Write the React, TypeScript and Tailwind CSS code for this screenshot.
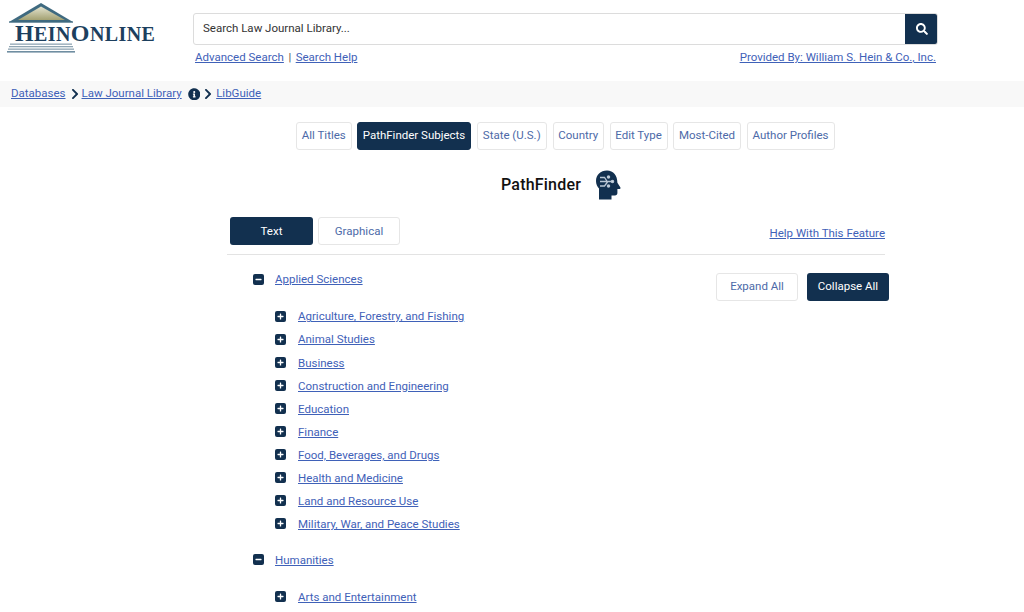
import { FaChevronRight, FaSearch, FaInfoCircle, FaPlus, FaMinus } from "react-icons/fa";

const F = "[font-family:Roboto,sans-serif]";

function Logo() {
  return (
    <div className="relative w-[160px] h-[54px] shrink-0">
      <svg width="160" height="54" viewBox="0 0 160 54" className="absolute left-0 top-[-1px]">
        <defs>
          <linearGradient id="ped" x1="0" y1="0" x2="0" y2="1">
            <stop offset="0" stopColor="#e4e4d0" />
            <stop offset="1" stopColor="#a3a172" />
          </linearGradient>
        </defs>
        <path d="M41 3 L9 22 H73 Z" fill="#3f6a80" />
        <path d="M41 6.5 L18 20 H65 Z" fill="url(#ped)" />
        <rect x="9" y="21.5" width="64" height="1.2" fill="#3f6a80" />
        <rect x="10" y="43.5" width="62" height="1.3" fill="#8fa5b3" />
        <rect x="9" y="46" width="64" height="1.3" fill="#8fa5b3" />
        <rect x="8" y="48.5" width="66" height="1.3" fill="#8fa5b3" />
        <rect x="7" y="51" width="68" height="1.6" fill="#6f8ea1" />
      </svg>
      <div className="absolute left-[15px] top-[20px] whitespace-nowrap text-[#1c3f5e] font-bold leading-[24px] [font-family:'Liberation_Serif',serif] tracking-[0.4px]">
        <span className="text-[24px]">H</span>
        <span className="text-[20px]">EIN</span>
        <span className="text-[24px]">O</span>
        <span className="text-[20px]">NLINE</span>
      </div>
    </div>
  );
}

function HeadIcon() {
  return (
    <svg width="26" height="30" viewBox="0 0 26 30">
      <path
        d="M12 0.5C5.5 0.5 1 5 1 11c0 3.4 1.3 5.6 3 7.5V29.5h12.5v-4h3.5c1.4 0 2.4-1 2.4-2.4V19h2.2c.8 0 1.2-.9.8-1.5l-3-4.7C22.4 5.5 18.5.5 12 .5Z"
        fill="#12304f"
      />
      <g stroke="#b9c6d4" strokeWidth="1.3" fill="#dfe6ee">
        <path d="M5 7.5h4.5l3 4.5M5 11.5h12M5 16h4.5l3-4" fill="none" />
        <circle cx="13.5" cy="7" r="1.1" />
        <circle cx="17.5" cy="11.5" r="1.1" />
        <circle cx="13.5" cy="16" r="1.1" />
      </g>
    </svg>
  );
}

function Tab({ label, active, w }: { label: string; active?: boolean; w: string }) {
  return (
    <div
      className={
        "h-[28px] flex items-center justify-center rounded-[3px] border text-[11.5px] " +
        w +
        (active ? " bg-[#12304f] border-[#12304f] text-white" : " bg-white border-[#e6e6e6] text-[#4d6aa8]")
      }
    >
      {label}
    </div>
  );
}

function Toggle({ open }: { open?: boolean }) {
  const Icon = open ? FaMinus : FaPlus;
  return (
    <span className="w-[11px] h-[11px] rounded-[2px] bg-[#12304f] flex items-center justify-center shrink-0">
      <Icon size={7} color="#fff" />
    </span>
  );
}

function Parent({ label }: { label: string }) {
  return (
    <div className="flex items-center h-[18px] pl-[26px] gap-[11px]">
      <Toggle open />
      <a className="text-[11.5px] mt-[2px] underline text-[#3f61b8]">{label}</a>
    </div>
  );
}

function Child({ label }: { label: string }) {
  return (
    <div className="flex items-center h-[18px] pl-[48px] gap-[12px]">
      <Toggle />
      <a className="text-[11.5px] mt-[2px] underline text-[#3f61b8]">{label}</a>
    </div>
  );
}

const applied = [
  "Agriculture, Forestry, and Fishing",
  "Animal Studies",
  "Business",
  "Construction and Engineering",
  "Education",
  "Finance",
  "Food, Beverages, and Drugs",
  "Health and Medicine",
  "Land and Resource Use",
  "Military, War, and Peace Studies",
];

export default function App() {
  return (
    <div className={"w-[1024px] h-[612px] overflow-hidden bg-white " + F}>
      <header className="h-[81px] flex pt-[1px]">
        <Logo />
        <div className="ml-[33px] w-[745px] pt-[12px]">
          <div className="flex h-[32px] border border-[#dcdcdc] rounded-[3px] overflow-hidden">
            <div className="flex-1 flex items-center pl-[9px] text-[11.5px] text-[#333]">Search Law Journal Library...</div>
            <div className="w-[33px] -my-px -mr-px bg-[#12304f] flex items-center justify-center">
              <FaSearch size={12} color="#fff" />
            </div>
          </div>
          <div className="flex justify-between mt-[5px] pl-[2px] pr-[2px] text-[11.5px] leading-[15px] text-[#3f61b8]">
            <div className="flex gap-[4.5px]">
              <a className="underline">Advanced Search</a>
              <span className="text-[#555]">|</span>
              <a className="underline">Search Help</a>
            </div>
            <a className="underline">Provided By: William S. Hein &amp; Co., Inc.</a>
          </div>
        </div>
      </header>

      <nav className="h-[26px] bg-[#f8f8f8] flex items-center pl-[11px] text-[11.5px] text-[#3f61b8]">
        <a className="underline">Databases</a>
        <FaChevronRight size={12} color="#12304f" className="ml-[3px] mr-[1px]" />
        <a className="underline">Law Journal Library</a>
        <FaInfoCircle size={12.5} color="#12304f" className="ml-[6px]" />
        <FaChevronRight size={12} color="#12304f" className="mx-[2px]" />
        <a className="underline">LibGuide</a>
      </nav>

      <div className="flex gap-[5.5px] mt-[15px] ml-[296px]">
        <Tab label="All Titles" w="w-[55.5px]" />
        <Tab label="PathFinder Subjects" active w="w-[114px]" />
        <Tab label="State (U.S.)" w="w-[70.5px]" />
        <Tab label="Country" w="w-[51.5px]" />
        <Tab label="Edit Type" w="w-[58px]" />
        <Tab label="Most-Cited" w="w-[68px]" />
        <Tab label="Author Profiles" w="w-[88px]" />
      </div>

      <div className="flex items-center gap-[14px] mt-[20px] h-[30px] ml-[501px]">
        <h1 className="text-[16px] font-medium text-[#111] tracking-[0.2px]">PathFinder</h1>
        <HeadIcon />
      </div>

      <section className="ml-[227px] w-[662px] mt-[17px]">
        <div className="w-[658px] flex items-start h-[38px] pl-[3px] border-b border-[#e3e3e3]">
          <div className="w-[83px] h-[28px] pt-[1px] rounded-[3px] bg-[#12304f] text-white text-[11.5px] flex items-center justify-center">Text</div>
          <div className="ml-[5px] w-[82px] h-[28px] pt-[1px] rounded-[3px] border border-[#e6e6e6] text-[#4d6aa8] text-[11.5px] flex items-center justify-center">Graphical</div>
          <a className="ml-auto mt-[8px] text-[11.5px] underline text-[#3f61b8]">Help With This Feature</a>
        </div>

        <div className="flex justify-between">
          <div className="pt-[15px]">
            <Parent label="Applied Sciences" />
            <div className="mt-[19px] flex flex-col gap-[5.1px]">
              {applied.map((a) => (
                <Child key={a} label={a} />
              ))}
            </div>
            <div className="mt-[18px]">
              <Parent label="Humanities" />
            </div>
            <div className="mt-[19px]">
              <Child label="Arts and Entertainment" />
            </div>
          </div>
          <div className="flex gap-[9px] pt-[18px]">
            <div className="w-[82px] h-[28px] rounded-[3px] border border-[#e6e6e6] text-[#4d6aa8] text-[11.5px] flex items-center justify-center">Expand All</div>
            <div className="w-[82px] h-[28px] rounded-[3px] bg-[#12304f] text-white text-[11.5px] flex items-center justify-center">Collapse All</div>
          </div>
        </div>
      </section>
    </div>
  );
}
